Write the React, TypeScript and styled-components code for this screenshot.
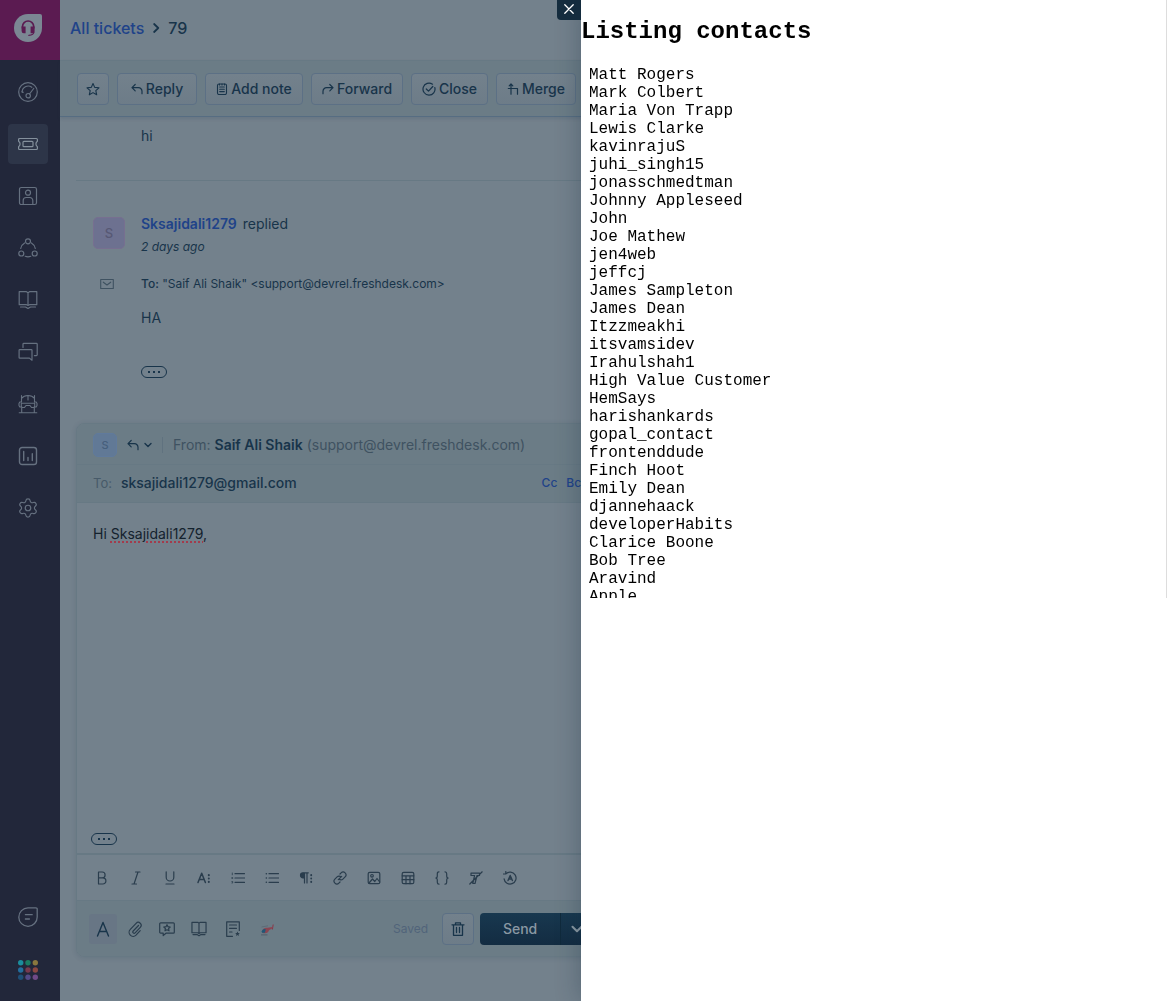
import React from "react";
import styled, { createGlobalStyle, css } from "styled-components";
import { Settings } from "lucide-react";

const c = {
  page: "#73818c",
  bar: "#6b7c86",
  rail: "#22273a",
  railActive: "#2d3548",
  railIcon: "#667180",
  ink: "#18344a",
  muted: "#3f5261",
  faint: "#475a69",
  link: "#1f4389",
  softLine: "#677984",
};

const Global = createGlobalStyle`
  *, *::before, *::after { box-sizing: border-box; }
  html, body, #root { height: 100%; }
  body {
    margin: 0;
    overflow: hidden;
    background: ${c.page};
    color: ${c.ink};
    font-family: Inter, "Liberation Sans", sans-serif;
    font-size: 14px;
    line-height: 20px;
  }
  button, input { font: inherit; color: inherit; }
  svg { display: block; flex: none; }
`;

/* ---------- icons ---------- */

type IconProps = { size?: number; box?: number; stroke?: number; children: React.ReactNode };

const Icon = ({ size = 20, box = 20, stroke = 1.2, children }: IconProps) => (
  <svg
    width={size}
    height={size}
    viewBox={`0 0 ${box} ${box}`}
    fill="none"
    stroke="currentColor"
    strokeWidth={stroke}
    strokeLinecap="round"
    strokeLinejoin="round"
    aria-hidden="true"
  >
    {children}
  </svg>
);

const LogoIcon = () => (
  <svg width="28" height="28" viewBox="0 0 28 28" aria-hidden="true">
    <path d="M14 0h12a2 2 0 0 1 2 2v12A14 14 0 1 1 14 0Z" fill="#7b8793" />
    <path d="M8.500 14.500V12.600a5.600 5.600 0 0 1 11.200 0v1.900" fill="none" stroke="#5b1b51" strokeWidth="1.700" />
    <path d="M7.600 12.500h4v6.700h-1.800a2.200 2.200 0 0 1-2.200-2.200zM16.600 12.500h4V17a2.200 2.200 0 0 1-2.200 2.200h-1.800z" fill="#5b1b51" />
    <path d="M20 18c-.3 2.400-1.800 3.200-5.200 3.300" fill="none" stroke="#5b1b51" strokeWidth="1.200" strokeLinecap="round" />
  </svg>
);

const GaugeIcon = () => (
  <Icon>
    <circle cx="10" cy="10" r="9.300" />
    <path d="M4.200 10.500a6 6 0 0 1 9.600-5.200M3.800 9.500l1.500.7M11.500 12l4.200-5.500" />
    <circle cx="10.200" cy="13.700" r="2.200" />
  </Icon>
);
const TicketIcon = () => (
  <Icon>
    <path d="M1.600 4.500h16.800a1 1 0 0 1 1 1v1.800a3.200 3.200 0 0 0 0 5.400v1.800a1 1 0 0 1-1 1H1.600a1 1 0 0 1-1-1v-1.800a3.200 3.200 0 0 0 0-5.400V5.500a1 1 0 0 1 1-1z" />
    <rect x="5" y="7.300" width="10" height="5.400" rx="1" />
  </Icon>
);
const ContactIcon = () => (
  <Icon>
    <rect x="1.500" y="1.500" width="17" height="17" rx="1.800" />
    <circle cx="10" cy="6.700" r="2.500" />
    <path d="M5.200 18v-3.500a3 3 0 0 1 3-3h3.600a3 3 0 0 1 3 3V18" />
  </Icon>
);
const SocialIcon = () => (
  <Icon>
    <circle cx="10" cy="3.300" r="2.500" />
    <circle cx="3.300" cy="15.500" r="2.500" />
    <circle cx="16.700" cy="15.500" r="2.500" />
    <path d="M6.600 5A8 8 0 0 0 2.700 10.500M13.400 5a8 8 0 0 1 3.900 5.500M7.200 18.300a8.500 8.500 0 0 0 5.600 0" />
  </Icon>
);
const BookIcon = ({ size = 20, stroke = 1.200 }: { size?: number; stroke?: number }) => (
  <Icon size={size} stroke={stroke}>
    <path d="M1.200 1.700h7.300L10 2.700l1.500-1h7.300v13h-7.300l-1.500.8-1.500-.8H1.200zM10 2.700v12.600M2.500 17h5l2.500 1.500 2.500-1.500h5" />
  </Icon>
);
const ForumIcon = () => (
  <Icon>
    <path d="M5 5.500V2.200A.8.800 0 0 1 5.800 1.400h12.600a.8.800 0 0 1 .8.800v10.600a.8.800 0 0 1-.8.800h-2M1.800 7.600h11.500a.7.700 0 0 1 .7.700v9.900l-2.600-2.100H1.800a.7.700 0 0 1-.7-.7V8.300a.7.700 0 0 1 .7-.7z" />
  </Icon>
);
const FreddyIcon = () => (
  <Icon stroke={1.100}>
    <path d="M3.500 8V1.500M16.500 8V1.500M3.500 4.500C5 2.500 7.500 1.500 10 1.500s5 1 6.500 3M10 1.500V6M3.300 9.300h13.400v3l-1 1.200h-2.200l-1.500-2H8l-1.500 2H4.300l-1-1.200zM3.300 8H1.800l-.8 1.500v2l.8 1.500h1.500M16.700 8h1.500l.8 1.500v2l-.8 1.500h-1.500M3.700 13.500v5M16.300 13.500v5M1.200 18.800h17.600" />
  </Icon>
);
const ChartIcon = () => (
  <Icon stroke={1.400}>
    <rect x="1.500" y="1.500" width="17" height="17" rx="2.600" />
    <path d="M5.700 5.500v9M10 11.500v3M14.300 7.800v6.700" />
  </Icon>
);
const GearIcon = () => <Settings size={22} strokeWidth={1.300} aria-hidden="true" />;
const NoteDropIcon = () => (
  <Icon stroke={1.300}>
    <path d="M10 .9h8a1.200 1.200 0 0 1 1.200 1.200V10A9.200 9.200 0 1 1 10 .9zM7.400 7.700h6.800M7.400 12h4" />
  </Icon>
);
const dotColors = ["#1b8d9c", "#1b7b63", "#8a783e", "#236e9e", "#78394e", "#8a4842", "#1f4f76", "#534a87", "#704a87"];
const AppsIcon = () => (
  <svg width="20" height="20" viewBox="0 0 20 20" aria-hidden="true">
    {dotColors.map((fill, i) => (
      <circle key={fill} cx={2.700 + (i % 3) * 7.300} cy={2.700 + Math.floor(i / 3) * 7.300} r="2.700" fill={fill} />
    ))}
  </svg>
);

const StarIcon = () => (
  <Icon size={14} box={14} stroke={1.100}>
    <path d="M7 1.500l1.700 3.900 4.300.4-3.200 2.800.9 4.200L7 10.600l-3.700 2.200.9-4.200L1 5.800l4.300-.4z" />
  </Icon>
);
const ReplyIcon = () => (
  <Icon size={12} box={12} stroke={1.200}>
    <path d="M4.200 1.500L1 4.700l3.200 3.200M1 4.700h6.500A3.500 3.500 0 0 1 11 8.200v2.500" />
  </Icon>
);
const ForwardIcon = () => (
  <Icon size={12} box={12} stroke={1.200}>
    <path d="M7.800 1.500L11 4.700 7.800 7.900M11 4.700H4.500A3.500 3.500 0 0 0 1 8.200v2.500" />
  </Icon>
);
const NoteIcon = () => (
  <Icon size={12} box={12} stroke={1.100}>
    <rect x="1.500" y="1" width="9" height="10.500" rx="1.500" />
    <path d="M3.500 1v1M6 1v1M8.500 1v1M3.700 4h4.600M3.700 6.300h4.600M3.700 8.600h4.600" />
  </Icon>
);
const CheckIcon = () => (
  <Icon size={14} box={14} stroke={1.200}>
    <path d="M12.800 5.500a6 6 0 1 1-2.300-3.300M4.300 7l2.200 2.200 4.300-4.700" />
  </Icon>
);
const MergeIcon = () => (
  <Icon size={12} box={12} stroke={1.200}>
    <path d="M4 11.200V1M2.200 2.800L4 1l1.800 1.800M1.300 5.500H10.500v5.700" />
  </Icon>
);
const ChevronIcon = ({ right = false, size = 8 }: { right?: boolean; size?: number }) => (
  <Icon size={size} box={8} stroke={1.400}>
    <path d={right ? "M2.500 .8L5.800 4 2.500 7.200" : "M1 2.500l3 3 3-3"} />
  </Icon>
);
const MailIcon = () => (
  <Icon size={14} box={14} stroke={1.100}>
    <rect x=".7" y="2.500" width="12.600" height="9" />
    <path d="M3.300 5.200L7 8l3.700-2.800" />
  </Icon>
);
const CloseIcon = () => (
  <Icon size={10} box={10} stroke={1.300}>
    <path d="M.8.800l8.400 8.400M9.200.800L.8 9.200" />
  </Icon>
);

const f = (children: React.ReactNode, stroke = 1.200) => (
  <Icon size={14} box={14} stroke={stroke}>{children}</Icon>
);
const formatTools: [string, React.ReactNode][] = [
  ["Bold", f(<path d="M3.500 1v12h4.300a3 3 0 0 0 0-6.200H3.500 7.200a2.900 2.900 0 0 0 0-5.800z" />)],
  ["Italic", f(<path d="M6.500 1H11M3 13h4.500M9 1L5 13" />)],
  ["Underline", f(<path d="M3.200.8v5.400a3.800 3.800 0 0 0 7.600 0V.8M3 13h8" />)],
  ["Font size", f(<><path d="M1 11.500L4.700 2.200l3.700 9.300M2.300 8.500h4.800" strokeWidth="1.500" /><path d="M11.800 4v.2M11.800 7.400v.2M11.800 10.800v.2" strokeWidth="2" /></>)],
  ["Numbered list", f(<><path d="M4 2.700h9.500M4 7h9.500M4 11.300h9.500" /><path d="M1.300 2v1.800M.9 6.500h.8v1H.9M.9 10.500h.8v1.500H.9" strokeWidth=".8" /></>)],
  ["Bulleted list", f(<><path d="M4 2.700h9.500M4 7h9.500M4 11.300h9.500" /><path d="M1.300 2.700h.1M1.300 7h.1M1.300 11.300h.1" strokeWidth="1.500" /></>)],
  ["Paragraph", f(<><path d="M9.300 1.800H4a2.500 2.500 0 0 0 0 5h1.300M5.500 1.800V12M8 1.800V12" /><path d="M3.800 2.300h1.500v4H3.800a2 2 0 0 1 0-4z" fill="currentColor" /><path d="M12.200 4v.2M12.200 7.400v.2M12.200 10.800v.2" strokeWidth="1.900" /></>)],
  ["Link", f(<path d="M6 8a2.700 2.700 0 0 0 3.900.1l2.200-2.200a2.800 2.800 0 0 0-4-4L7 3M8 6a2.700 2.700 0 0 0-3.900-.1L1.900 8.100a2.800 2.800 0 0 0 4 4L7 11M5.300 8.700l3.400-3.400" />)],
  ["Image", f(<><rect x="1.200" y="1.300" width="11.600" height="11.400" rx="1.500" /><circle cx="5" cy="4.800" r="1.300" /><path d="M2 12l3.500-4 2.300 2.500L10 7.500l2.700 3.500" /></>)],
  ["Table", f(<><rect x="1.200" y="1.300" width="11.600" height="11.400" rx="1.500" /><path d="M1.200 4.800h11.600M1.200 8.700h11.600M5 4.800v7.900M9 4.800v7.900" /></>)],
  ["Code", f(<path d="M4 .8C2.500.8 2.300 1.700 2.300 2.700v2C2.300 6 1.700 7 .8 7c.9 0 1.500 1 1.500 2.300v2c0 1 .2 1.900 1.700 1.900M10 .8c1.500 0 1.700.9 1.700 1.900v2c0 1.300.6 2.300 1.500 2.300-.9 0-1.500 1-1.500 2.300v2c0 1-.2 1.900-1.700 1.900" />)],
  ["Clear formatting", f(<path d="M2 2.200h8.500v2.300H8L6 12.500H3.800L5.600 4.500H2zM.8 13L13.200.8" />)],
  ["Restore draft", f(<><path d="M2.800 2.800a6 6 0 1 1-1.700 5M2.800.5v2.500H.5" /><path d="M5 9.500l2.200-5 2.200 5M5.700 8h3" strokeWidth="1.400" /></>)],
];

const insertTools: [string, React.ReactNode][] = [
  ["Attach file", <Icon size={16} box={16} key="a"><path d="M11.500 4.500L6.200 10a1.300 1.300 0 0 0 1.900 1.800l5.200-5.500a2.900 2.900 0 0 0-4.200-4L3.300 8.400a4 4 0 0 0 5.700 5.700l4.200-4.500" /></Icon>],
  ["Canned responses", <Icon size={16} box={16} key="c"><path d="M1.700 1.800h12.600a1 1 0 0 1 1 1v8.400a1 1 0 0 1-1 1H7l-2.800 2.300v-2.300H1.700a1 1 0 0 1-1-1V2.800a1 1 0 0 1 1-1zM8 3.700l1 2 2.200.3-1.600 1.500.4 2.300L8 8.700 6 9.800l.4-2.300L4.800 6 7 5.700z" /></Icon>],
  ["Solution articles", <BookIcon key="b" size={16} stroke={1.500} />],
];

/* ---------- navigation rail ---------- */

const Shell = styled.div`
  display: flex;
  height: 100vh;
  min-height: 720px;
`;
const Rail = styled.nav`
  display: flex;
  flex-direction: column;
  flex: none;
  width: 60px;
  background: ${c.rail};
`;
const Brand = styled.a`
  display: block;
  height: 60px;
  padding: 14px;
  background: #5b1b51;
`;
const RailGroup = styled.div<{ $bottom?: boolean }>`
  display: flex;
  flex-direction: column;
  gap: 12px;
  padding: 12px 8px;
  ${(p) => p.$bottom && css`gap: 13px; margin-top: auto; padding-bottom: 11px;`}
`;
const RailLink = styled.a<{ $active?: boolean }>`
  display: grid;
  place-items: center;
  width: 40px;
  height: 40px;
  border-radius: 4px;
  color: ${(p) => (p.$active ? "#84909c" : c.railIcon)};
  background: ${(p) => (p.$active ? c.railActive : "transparent")};
`;

/* ---------- page ---------- */

const Main = styled.main`
  display: flex;
  flex-direction: column;
  flex: 1;
  min-width: 0;
`;
const Crumbs = styled.header`
  display: flex;
  align-items: center;
  gap: 7px;
  height: 60px;
  padding: 0 10px 4px;
  font-size: 16px;
  font-weight: 500;
`;
const CrumbLink = styled.a`
  color: ${c.link};
  text-decoration: none;
`;
const Actions = styled.div`
  display: flex;
  align-items: center;
  gap: 8px;
  height: 57px;
  padding: 0 17px;
  background: ${c.bar};
  border-top: 1px solid ${c.softLine};
  border-bottom: 1px solid #566d82;
  box-shadow: 0 2px 3px rgba(40, 60, 80, 0.15);
`;
const Button = styled.button<{ $width?: number }>`
  display: flex;
  align-items: center;
  justify-content: center;
  gap: 3px;
  flex: none;
  width: ${(p) => p.$width ?? 32}px;
  height: 32px;
  padding: 0;
  border: 1px solid #5c7085;
  border-radius: 4px;
  background: linear-gradient(#73818c, #6d7c88);
  font-weight: 500;
`;
const Conversation = styled.section`
  display: flex;
  flex-direction: column;
  flex: 1;
  width: 51%;
  padding: 0 16px 44px;
`;
const Previous = styled.div`
  padding: 9px 0 34px 65px;
  border-bottom: 1px solid ${c.softLine};
`;
const Message = styled.article`
  display: grid;
  grid-template-columns: 32px 1fr;
  column-gap: 16px;
  padding: 33px 17px 45px;
`;
const Avatar = styled.div<{ $small?: boolean }>`
  display: grid;
  place-items: center;
  flex: none;
  width: ${(p) => (p.$small ? 24 : 32)}px;
  height: ${(p) => (p.$small ? 24 : 32)}px;
  margin-top: ${(p) => (p.$small ? 0 : 3)}px;
  border: 1px solid ${(p) => (p.$small ? "#607a9c" : "#776f90")};
  border-radius: 5px;
  background: ${(p) => (p.$small ? "#617996" : "#6d7190")};
  color: ${(p) => (p.$small ? "#465f7c" : "#575874")};
  font-size: ${(p) => (p.$small ? 11 : 13)}px;
  font-weight: 500;
`;
const Author = styled.div`
  a { margin-right: 6px; color: ${c.link}; font-weight: 600; text-decoration: none; }
`;
const Time = styled.time`
  display: block;
  margin-top: 3px;
  font-size: 12px;
  font-style: italic;
`;
const MailCell = styled.div`
  padding: 20px 0 0 7px;
  color: ${c.muted};
`;
const Recipients = styled.div`
  padding-top: 17px;
  font-size: 12px;
  b { font-weight: 500; }
`;
const MessageBody = styled.div`
  grid-column: 2;
  padding-top: 14px;
`;
const Ellipsis = styled.button`
  display: flex;
  align-items: center;
  justify-content: center;
  gap: 3px;
  width: 26px;
  height: 12px;
  padding: 0;
  border: 1px solid ${c.ink};
  border-radius: 6px;
  background: none;
  i { width: 2px; height: 2px; background: ${c.ink}; }
`;
const Trimmed = styled.div`
  margin-top: 38px;
`;

/* ---------- composer ---------- */

const Composer = styled.form`
  display: flex;
  flex-direction: column;
  flex: 1;
  border: 1px solid ${c.softLine};
  border-radius: 8px;
  overflow: hidden;
  box-shadow: 0 1px 5px rgba(40, 60, 80, 0.16);
`;
const FromRow = styled.div`
  display: flex;
  align-items: center;
  height: 41px;
  padding: 2px 16px 0;
  background: ${c.bar};
  border-bottom: 1px solid ${c.softLine};
  color: ${c.muted};
  b { color: ${c.ink}; font-weight: 600; }
`;
const ReplyMode = styled.button`
  display: flex;
  align-items: center;
  gap: 5px;
  margin-left: 10px;
  padding: 0 10px 0 0;
  border: 0;
  border-right: 1px solid #60727f;
  background: none;
  color: ${c.ink};
  height: 16px;
`;
const FromText = styled.span`
  margin-left: 10px;
  white-space: nowrap;
`;
const ToRow = styled.div`
  display: flex;
  align-items: center;
  gap: 9px;
  height: 38px;
  padding: 0 20px 2px 16px;
  background: ${c.bar};
  border-bottom: 1px solid ${c.softLine};
  label { color: ${c.faint}; font-size: 13px; }
`;
const ToInput = styled.input`
  flex: 1;
  min-width: 0;
  padding: 0;
  border: 0;
  outline: 0;
  background: none;
  font-weight: 500;
`;
const CopyButton = styled.button`
  padding: 0;
  border: 0;
  background: none;
  color: ${c.link};
  font-size: 12px;
  font-weight: 500;
`;
const Editor = styled.div`
  display: flex;
  flex-direction: column;
  justify-content: space-between;
  flex: 1;
  padding: 21px 14px 8px;
`;
const Draft = styled.div`
  padding-left: 2px;
  color: #14222e;
  outline: 0;
  span { text-decoration: underline dotted #a23b4c 2px; text-underline-offset: 2px; }
`;
const FormatBar = styled.div`
  display: flex;
  align-items: center;
  height: 48px;
  padding-left: 8px;
  border-top: 2px solid ${c.softLine};
  border-bottom: 1px solid ${c.softLine};
`;
const Tool = styled.button<{ $wide?: boolean; $active?: boolean }>`
  display: grid;
  place-items: center;
  flex: none;
  width: ${(p) => (p.$wide ? 34 : 28)}px;
  height: 30px;
  padding: 0;
  border: 0;
  border-radius: 3px;
  background: ${(p) => (p.$active ? "#687685" : "none")};
  color: ${(p) => (p.$active ? c.ink : "#2a3d4d")};
`;
const Footer = styled.div`
  display: flex;
  align-items: center;
  height: 55px;
  padding: 1px 15px 0 12px;
  background: ${c.bar};
`;
const ToolGroup = styled.div<{ $gap: number }>`
  display: flex;
  gap: ${(p) => p.$gap}px;
  margin-right: 6px;
`;
const FooterEnd = styled.div`
  display: flex;
  align-items: center;
  gap: 6px;
  margin-left: auto;
`;
const Saved = styled.span`
  margin-right: 8px;
  color: #51647a;
  font-size: 12px;
`;
const SendGroup = styled.div`
  display: flex;
  height: 32px;
  border-radius: 4px;
  overflow: hidden;
  background: linear-gradient(#18384f, #132c42);
  color: #8a98a3;
`;
const SendButton = styled.button<{ $menu?: boolean }>`
  display: grid;
  place-items: center;
  width: ${(p) => (p.$menu ? 33 : 80)}px;
  padding: 0;
  border: 0;
  border-left: ${(p) => (p.$menu ? "1px solid #102a3c" : "0")};
  background: none;
  font-weight: 500;
`;

/* ---------- contacts drawer ---------- */

const Drawer = styled.aside`
  position: fixed;
  inset: 0 0 0 auto;
  width: calc(50% + 3px);
  background: #fff;
  color: #000;
  box-shadow: 0 0 24px rgba(20, 40, 60, 0.32);
`;
const DrawerClose = styled.button`
  position: absolute;
  top: 0;
  right: 100%;
  display: grid;
  place-items: center;
  width: 24px;
  height: 20px;
  padding: 0 0 2px;
  border: 0;
  border-radius: 0 0 0 4px;
  background: #142c3e;
  color: #fff;
`;
const DrawerFrame = styled.div`
  height: 598px;
  max-height: 100%;
  margin-right: 1px;
  border-right: 1px solid #ddd;
  overflow: hidden;
  font-family: "Liberation Mono", monospace;
  font-size: 16px;
  line-height: 18px;
`;
const DrawerTitle = styled.h2`
  margin: 0;
  padding: 18px 0 20px;
  font-size: 24px;
  line-height: 28px;
`;
const ContactList = styled.ul`
  margin: 0;
  padding: 0 8px;
  list-style: none;
`;

const contacts = [
  "Matt Rogers", "Mark Colbert", "Maria Von Trapp", "Lewis Clarke", "kavinrajuS", "juhi_singh15",
  "jonasschmedtman", "Johnny Appleseed", "John", "Joe Mathew", "jen4web", "jeffcj", "James Sampleton",
  "James Dean", "Itzzmeakhi", "itsvamsidev", "Irahulshah1", "High Value Customer", "HemSays",
  "harishankards", "gopal_contact", "frontenddude", "Finch Hoot", "Emily Dean", "djannehaack",
  "developerHabits", "Clarice Boone", "Bob Tree", "Aravind", "Apple",
];

const navItems: [string, React.ReactNode][] = [
  ["Dashboard", <GaugeIcon key="i" />],
  ["Tickets", <TicketIcon key="i" />],
  ["Contacts", <ContactIcon key="i" />],
  ["Social", <SocialIcon key="i" />],
  ["Solutions", <BookIcon key="i" />],
  ["Forums", <ForumIcon key="i" />],
  ["Freddy", <FreddyIcon key="i" />],
  ["Analytics", <ChartIcon key="i" />],
  ["Admin", <GearIcon key="i" />],
];

const Dots = () => (
  <Ellipsis type="button" aria-label="Show trimmed content"><i /><i /><i /></Ellipsis>
);

export default function App() {
  return (
    <>
      <Global />
      <Shell>
        <Rail aria-label="Main">
          <Brand href="#" aria-label="Home"><LogoIcon /></Brand>
          <RailGroup>
            {navItems.map(([name, icon]) => (
              <RailLink key={name} href="#" aria-label={name} $active={name === "Tickets"}>{icon}</RailLink>
            ))}
          </RailGroup>
          <RailGroup $bottom>
            <RailLink href="#" aria-label="Chat"><NoteDropIcon /></RailLink>
            <RailLink href="#" aria-label="Apps"><AppsIcon /></RailLink>
          </RailGroup>
        </Rail>

        <Main>
          <Crumbs>
            <CrumbLink href="#">All tickets</CrumbLink>
            <ChevronIcon right size={10} />
            <span>79</span>
          </Crumbs>
          <Actions>
            <Button aria-label="Star"><StarIcon /></Button>
            <Button $width={80}><ReplyIcon />Reply</Button>
            <Button $width={98}><NoteIcon />Add note</Button>
            <Button $width={92}><ForwardIcon />Forward</Button>
            <Button $width={77}><CheckIcon />Close</Button>
            <Button $width={80}><MergeIcon />Merge</Button>
          </Actions>

          <Conversation>
            <Previous>hi</Previous>
            <Message>
              <Avatar>S</Avatar>
              <div>
                <Author><a href="#">Sksajidali1279</a>replied</Author>
                <Time>2 days ago</Time>
              </div>
              <MailCell><MailIcon /></MailCell>
              <Recipients><b>To:</b> "Saif Ali Shaik" &lt;support@devrel.freshdesk.com&gt;</Recipients>
              <MessageBody>
                HA
                <Trimmed><Dots /></Trimmed>
              </MessageBody>
            </Message>

            <Composer onSubmit={(e) => e.preventDefault()}>
              <FromRow>
                <Avatar $small>S</Avatar>
                <ReplyMode type="button" aria-label="Reply type"><ReplyIcon /><ChevronIcon /></ReplyMode>
                <FromText>From: <b>Saif Ali Shaik</b> (support@devrel.freshdesk.com)</FromText>
              </FromRow>
              <ToRow>
                <label htmlFor="to">To:</label>
                <ToInput id="to" defaultValue="sksajidali1279@gmail.com" spellCheck={false} />
                <CopyButton type="button">Cc</CopyButton>
                <CopyButton type="button">Bcc</CopyButton>
              </ToRow>
              <Editor>
                <Draft role="textbox" aria-label="Reply" contentEditable suppressContentEditableWarning spellCheck={false}>
                  Hi <span>Sksajidali1279</span>,
                </Draft>
                <Dots />
              </Editor>
              <FormatBar>
                {formatTools.map(([name, icon]) => (
                  <Tool key={name} type="button" aria-label={name} $wide>{icon}</Tool>
                ))}
              </FormatBar>
              <Footer>
                <ToolGroup $gap={4}>
                  <Tool type="button" aria-label="Text formatting" $active>
                    <Icon size={16} box={16} stroke={1.400}><path d="M2.500 15L8 1.500 13.500 15M4.500 10.500h7" /></Icon>
                  </Tool>
                  {insertTools.map(([name, icon]) => (
                    <Tool key={name} type="button" aria-label={name}>{icon}</Tool>
                  ))}
                </ToolGroup>
                <ToolGroup $gap={6}>
                  <Tool type="button" aria-label="Templates">
                    <Icon size={16} box={16}><path d="M7.500 15.300H1.700V.8h12.600v8.700M4.500 4h7M4.500 7.300h7M4.500 11h2.500" /><path d="M12.500 10.500l.7 1.500 1.600.2-1.200 1.100.3 1.600-1.400-.8-1.400.8.3-1.600-1.200-1.100 1.600-.2z" fill="currentColor" stroke="none" /></Icon>
                  </Tool>
                  <Tool type="button" aria-label="Helicopter app">
                    <svg width="14" height="14" viewBox="0 0 14 14" aria-hidden="true">
                      <path d="M1.500 5L8 3.800" stroke="#5b6672" strokeWidth=".8" />
                      <path d="M13.200 2.500l-.8 5" stroke="#8a3548" strokeWidth="1" />
                      <path d="M2 9c1-2.500 3-3.700 5.500-3.200l5-.8v1.200L9 8.200c-.5 2-2 3-3.800 3.100S1.500 11 2 9z" fill="#8a4552" />
                      <path d="M1.800 9.200C2.500 7.500 4 6.800 5.700 7.200l-.7 3.500H2z" fill="#1f5878" />
                      <path d="M1 12.900h6.500" stroke="#4d5a66" strokeWidth=".9" />
                    </svg>
                  </Tool>
                </ToolGroup>
                <FooterEnd>
                  <Saved>Saved</Saved>
                  <Button type="button" aria-label="Delete draft">
                    <Icon size={14} box={14} stroke={1.300}><path d="M1 2.800h12M4.500 2.500V.8h5v1.700M2.500 3v10.300h9V3M5.500 5.500v5M8.500 5.500v5" /></Icon>
                  </Button>
                  <SendGroup>
                    <SendButton type="submit">Send</SendButton>
                    <SendButton type="button" aria-label="Send options" $menu><ChevronIcon size={12} /></SendButton>
                  </SendGroup>
                </FooterEnd>
              </Footer>
            </Composer>
          </Conversation>
        </Main>
      </Shell>

      <Drawer aria-label="Listing contacts">
        <DrawerClose aria-label="Close panel"><CloseIcon /></DrawerClose>
        <DrawerFrame>
          <DrawerTitle>Listing contacts</DrawerTitle>
          <ContactList>
            {contacts.map((name) => <li key={name}>{name}</li>)}
          </ContactList>
        </DrawerFrame>
      </Drawer>
    </>
  );
}
